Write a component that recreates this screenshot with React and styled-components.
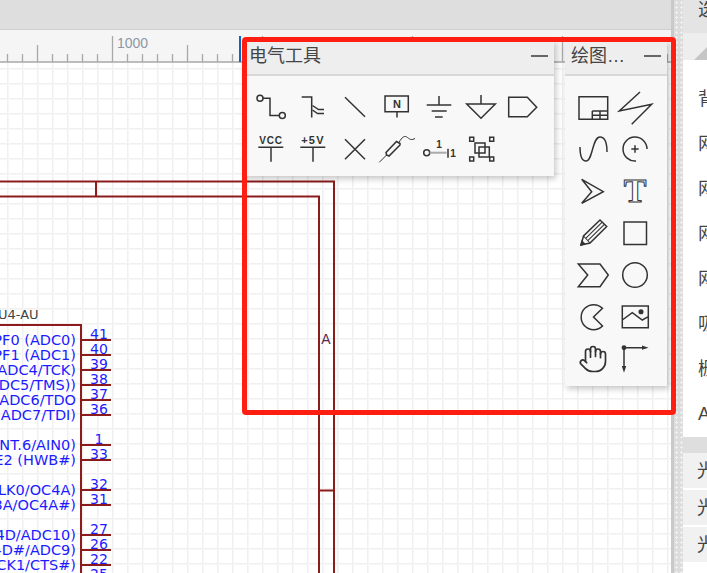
import React from "react";
import styled, { createGlobalStyle } from "styled-components";
import { Hand } from "lucide-react";

const Global = createGlobalStyle`
  html, body { margin: 0; padding: 0; width: 707px; height: 573px; overflow: hidden; background: #fff; }
  #root { width: 707px; height: 573px; }
`;

const CJK = `"Liberation Sans", "Noto Sans CJK SC", sans-serif`;

const Page = styled.div`
  position: relative; display: flex; width: 707px; height: 573px; overflow: hidden;
  font-family: ${CJK}; color: #444;
`;
const Main = styled.div`display: flex; flex-direction: column; width: 671px; flex: none;`;
const TopBar = styled.div`height: 29px; flex: none; background: #dedede; border-bottom: 1px solid #cfcfcf;`;
const Ruler = styled.svg`display: block; flex: none; width: 671px; height: 33px; background: #f5f5f5;`;
const Canvas = styled.div`
  flex: 1; min-height: 0; background-color: #fff;
  background-image:
    linear-gradient(to right, #f0f0f0 1px, #f7f7f7 1px, #f7f7f7 2px, transparent 2px),
    linear-gradient(to bottom, #f0f0f0 1px, #f7f7f7 1px, #f7f7f7 2px, transparent 2px);
  background-size: 15px 15px;
  background-position: 7px 5px;
`;
const Schematic = styled.svg`display: block; width: 671px; height: 510px;`;
const Splitter = styled.div`
  width: 12px; flex: none; box-sizing: border-box; border-left: 3px solid #c9c9c9; background-color: #dcdcdc;
  background-image: radial-gradient(circle, #f0f0f0 1px, transparent 1.2px);
  background-size: 5px 5px;
`;
const Side = styled.div`flex: 1; min-width: 0; display: flex; flex-direction: column; background: #fff; overflow: hidden;`;
const SideTab = styled.div`
  height: 33px; flex: none; box-sizing: border-box; padding-left: 15px; background: #e4e4e4;
  font-size: 18px; line-height: 20px; white-space: nowrap; color: #444;
`;
const SideHead = styled.div`
  height: 27px; flex: none; background: #eeeeee; display: flex; justify-content: flex-end; align-items: flex-end;
`;
const Corner = styled.div`
  width: 0; height: 0; border-left: 13px solid transparent; border-bottom: 13px solid #c6c6c6;
`;
const Props = styled.div`flex: none; padding: 17px 0 0 15px; height: 360px;`;
const PropRow = styled.div`height: 45px; line-height: 45px; font-size: 18px; white-space: nowrap; color: #444;`;
const Band = styled.div`height: 16px; flex: none; background: #dedede;`;
const Acc = styled.div`
  height: 35px; flex: none; margin-bottom: 2px; padding-left: 14px; background: #f1f1f1;
  font-size: 18px; line-height: 37px; white-space: nowrap; color: #444;
`;

const Tool = styled.section`
  position: absolute; top: 40px; left: ${p => p.$left}px; z-index: 2;
  box-sizing: border-box; width: ${p => p.$width}px;
  background: #f8f8f8; box-shadow: 2px 3px 6px rgba(0,0,0,.22);
`;
const ToolHead = styled.header`
  display: flex; align-items: center; justify-content: space-between; box-sizing: border-box;
  height: 36px; padding: 0 6px 3px 6px; background: #eeeeee; border-bottom: 2px solid #d8d8d8;
`;
const ToolTitle = styled.div`
  font-size: 18px; line-height: 26px; color: #444; white-space: nowrap; overflow: hidden; text-overflow: ellipsis;
  max-width: ${p => p.$max}px;
`;
const Minimize = styled.div`width: 17px; height: 2px; background: #666;`;
const ToolGrid = styled.div`
  display: grid; grid-template-columns: repeat(${p => p.$cols}, 42px); grid-auto-rows: 42px;
  padding: 10px 0 6px 7px;
`;
const Cell = styled.div`display: flex; align-items: center; justify-content: center; color: #333;`;
const Ico = styled.svg`
  width: 42px; height: 42px; display: block; fill: none; stroke: #333; stroke-width: 1.5;
`;
const IcoText = styled.text`
  font-family: "Liberation Sans", sans-serif; font-weight: 700; font-size: ${p => p.$size || 10}px;
  fill: #333; stroke: none; text-anchor: middle; letter-spacing: ${p => p.$ls || 0}px;
`;
const SerifT = styled.text`
  font-family: "Liberation Serif", serif; font-weight: 700; font-size: 34px;
  fill: #fdfdfd; stroke: #333; stroke-width: 1; text-anchor: middle;
`;
const Highlight = styled.div`
  position: absolute; z-index: 5; left: 242px; top: 37px; width: 434px; height: 378px; box-sizing: border-box;
  border: 5px solid #ff1f12; border-radius: 4px; pointer-events: none;
`;

const RulerLabel = styled.text`font-family: "Liberation Sans", sans-serif; font-size: 14px; fill: #8d96a8;`;
const PinLabel = styled.text`font-family: "DejaVu Sans", sans-serif; font-size: 14.5px; fill: #1c1cff; text-anchor: end;`;
const PinNum = styled.text`font-family: "DejaVu Sans", sans-serif; font-size: 14px; fill: #1c1cff; text-anchor: middle;`;
const RefText = styled.text`font-family: "DejaVu Sans", sans-serif; font-size: 13px; fill: #444;`;
const Zone = styled.text`font-family: "Liberation Sans", sans-serif; font-size: 14px; fill: #5a2a4a; text-anchor: middle;`;

const ticks = Array.from({ length: 45 }, (_, i) => 7 + i * 15).filter(x => x < 668);
const RulerView = () => (
  <Ruler viewBox="0 30 671 33">
    <line x1="0" x2="671" y1="62" y2="62" stroke="#a8a8a8" strokeWidth="1.5" />
    {ticks.map(x => {
      const k = (x - 37) / 15;
      const y = k % 10 === 5 ? 36 : k % 5 === 0 ? 45 : 54;
      return <line key={x} x1={x + .5} x2={x + .5} y1={y} y2="62" stroke="#a8a8a8" strokeWidth="1.3" />;
    })}
    <RulerLabel x="117" y="48">1000</RulerLabel>
    <line x1="240" x2="240" y1="36" y2="62" stroke="#0a66c8" strokeWidth="2" />
  </Ruler>
);

const pins = [
  ["PF0 (ADC0)", "41", 340], ["PF1 (ADC1)", "40", 355], ["PF4 (ADC4/TCK)", "39", 370],
  ["PF5 (ADC5/TMS))", "38", 385], ["PF6 (ADC6/TDO", "37", 400], ["PF7 (ADC7/TDI)", "36", 415],
  ["PE6 (INT.6/AIN0)", "1", 445], ["PE2 (HWB#)", "33", 460], ["PC7 (CLK0/OC4A)", "32", 490],
  ["PC6 (OC3A/OC4A#)", "31", 505], ["PD7 (OC4D/ADC10)", "27", 535], ["PD6 (OC4D#/ADC9)", "26", 550],
  ["PD5 (XCK1/CTS#)", "22", 565], ["", "25", 580],
];
const wire = "#8c1c1c";
const SchematicView = () => (
  <Schematic viewBox="0 63 671 510">
    <g fill="none" stroke={wire} strokeWidth="2">
      <path d="M0 181.5H334V573" />
      <path d="M0 196.5H319V573" />
      <path d="M96 181V196" />
      <path d="M319 490.5H334" />
      <path d="M0 325H81V573" />
      {pins.map(([, , y]) => <line key={y} x1="81" x2="111" y1={y} y2={y} strokeWidth="2" />)}
    </g>
    <RefText x="-2" y="319">U4-AU</RefText>
    <Zone x="326" y="344">A</Zone>
    {pins.map(([l, n, y]) => (
      <React.Fragment key={y}>
        {l && <PinLabel x="76" y={y + 5}>{l}</PinLabel>}
        <PinNum x="99" y={y - 1}>{n}</PinNum>
      </React.Fragment>
    ))}
  </Schematic>
);

const I = ({ children }) => <Ico viewBox="0 0 42 42">{children}</Ico>;

const electric = [
  <I><circle cx="10" cy="12.3" r="3" /><path d="M13 12.3H20V29.6H29" /><circle cx="32.3" cy="29.6" r="3" /></I>,
  <I><path d="M9.7 11H19.7V31.5" /><path d="M20.5 19.5L26.5 23.5H32M20.5 24L25.5 27.5H32" /></I>,
  <I><path d="M11 11.3L31 30.7" /></I>,
  <I><path d="M9 10H32.3V25.7H9ZM21 25.7V31.5" /><IcoText x="21" y="22" $size={11}>N</IcoText></I>,
  <I><path d="M21 10V19M8.7 19H33.3M13.7 25H28.7M17 31H24.7" /></I>,
  <I><path d="M21 9V18M6.7 18H35.3L21 32.3Z" /></I>,
  <I><path d="M6.7 11.3H25.3L34.7 21.3L25.3 30.7H6.7Z" /></I>,
  <I><IcoText x="21" y="15.5" $size={10} $ls={.8}>VCC</IcoText><path d="M8.3 19.3H33.3M21 19.3V33.7" /></I>,
  <I><IcoText x="21" y="15.5" $size={11} $ls={1.2}>+5V</IcoText><path d="M8.3 19.3H33.3M21 19.3V33.7" /></I>,
  <I><path d="M11 11.3L31 31.3M31 11.3L11 31.3" /></I>,
  <I>
    <path d="M3.3 34.3L10.6 27" strokeWidth="1" />
    <path d="M10.6 27L10 24.5L20.5 13.5L24 15.5L24 17L13 28Z" strokeWidth="1.5" />
    <path d="M23 14.5C26 9 28.5 7 31.5 9.5S36 12 39 10.5" strokeWidth="1" />
  </I>,
  <I>
    <circle cx="8.7" cy="24.7" r="3" />
    <path d="M11.7 24.7H28.5" stroke="#aaa" strokeWidth="2" />
    <path d="M30 20.7V29.7" />
    <IcoText x="21" y="20" $size={10}>1</IcoText>
    <IcoText x="35" y="29" $size={10}>1</IcoText>
  </I>,
  <I>
    <path d="M9.7 9.3h4v4h-4zM29.7 9.3h4v4h-4zM9.7 29h4v4h-4zM29.7 29h4v4h-4z" />
    <path d="M15 15H25V25H15ZM19 19H29.3V29H19Z" />
  </I>,
];

const drawing = [
  <I><path d="M7 10.7H35.7V33.3H7ZM20.3 25H35.7M20.3 25V33.3M28 25V33.3M20.3 29.2H35.7" /></I>,
  <I><path d="M26 6L5.3 25L37.7 18.3L17.7 38.3" /></I>,
  <I><path d="M8 19C8 27 9 33 14 33C21 33 20 9 28 9C33 9 35 16 35 24" /></I>,
  <I><path d="M33 21A12 12 0 1 0 22 33M21 17.3V24.7M17.3 21H24.7" /></I>,
  <I><path d="M9.7 9.3L31.3 21.7L9.7 33.3L19.7 21.7Z" /></I>,
  <I><SerifT x="21" y="32">T</SerifT></I>,
  <I>
    <path d="M9 33L11.5 24L28 8L34.7 14.5L18 31Z" />
    <path d="M13.7 26.3L30.2 10.2M15.8 28.7L32.4 12.3M11.5 24L18 31" strokeWidth="1.1" />
    <path d="M9 33L10 29.5L12.5 32Z" fill="#333" />
  </I>,
  <I><path d="M10 10H32.5V32.5H10Z" /></I>,
  <I><path d="M6.3 10H28L36.3 21L28 32.7H6.3L15.7 21Z" /></I>,
  <I><circle cx="21" cy="21" r="12.3" /></I>,
  <I><path d="M30.5 12.3A12.5 12.5 0 1 0 30.5 30L21.5 21Z" /></I>,
  <I>
    <path d="M8.3 10H34.3V31.7H8.3ZM8.3 24L18.3 16.7L28.3 24L34.3 20.7" />
    <circle cx="27" cy="15.7" r="1.8" fill="#333" />
  </I>,
  <Hand size={30} strokeWidth={1.35} />,
  <I>
    <circle cx="10" cy="9.7" r="2.4" fill="#333" stroke="none" />
    <path d="M10 9.7H29M10 9.7V29" />
    <path d="M34.5 9.7L28 7.6V11.8ZM10 34.7L7.8 28H12.2Z" fill="#333" stroke="none" />
  </I>,
];

const ToolPanel = ({ title, left, width, cols, titleMax, items }) => (
  <Tool $left={left} $width={width}>
    <ToolHead>
      <ToolTitle $max={titleMax}>{title}</ToolTitle>
      <Minimize />
    </ToolHead>
    <ToolGrid $cols={cols}>
      {items.map((it, i) => <Cell key={i}>{it}</Cell>)}
    </ToolGrid>
  </Tool>
);

const props = ["背景颜色", "网格可见", "网格颜色", "网格样式", "网格大小", "吸附", "栅格尺寸", "Alt键栅格尺寸"];

export default function App() {
  return (
    <Page>
      <Global />
      <Main>
        <TopBar />
        <RulerView />
        <Canvas><SchematicView /></Canvas>
      </Main>
      <Splitter />
      <Side>
        <SideTab>选择过滤器</SideTab>
        <SideHead><Corner /></SideHead>
        <Props>{props.map(p => <PropRow key={p}>{p}</PropRow>)}</Props>
        <Band />
        <Acc>光标</Acc>
        <Acc>光标</Acc>
        <Acc>光标</Acc>
      </Side>
      <ToolPanel title="电气工具" left={243} width={311} cols={7} titleMax={200} items={electric} />
      <ToolPanel title="绘图工具集" left={565} width={102} cols={2} titleMax={56} items={drawing} />
      <Highlight />
    </Page>
  );
}
